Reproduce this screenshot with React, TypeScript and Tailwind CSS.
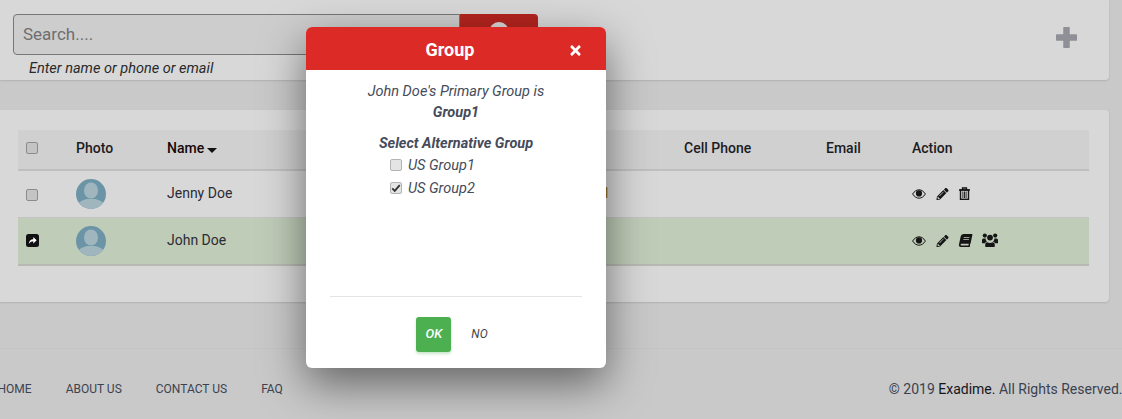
import { FaBook, FaPencilAlt, FaTimes } from "react-icons/fa";

const font = { fontFamily: "Roboto, 'Liberation Sans', sans-serif" };
const cols = "grid grid-cols-[58px_91px_300px_217px_142px_86px_177px] items-center";

function Box({ checked = false, dim = false }: { checked?: boolean; dim?: boolean }) {
  return (
    <span
      className={`flex h-[12px] w-[12px] items-center justify-center rounded-[2px] border ${
        dim ? "border-[#8c8c8c] bg-[#c4c4c4]" : "border-[#b4b4b4] bg-[#e4e4e4]"
      }`}
    >
      {checked && (
        <svg viewBox="0 0 12 12" className="h-[10px] w-[10px] text-[#333]">
          <path d="M1.5 6.5 4.5 9.5 10.5 2.5" fill="none" stroke="currentColor" strokeWidth="2.2" />
        </svg>
      )}
    </span>
  );
}

function Avatar() {
  return (
    <svg viewBox="0 0 30 30" className="h-[30px] w-[30px]">
      <defs>
        <clipPath id="avatar-clip">
          <circle cx="15" cy="15" r="15" />
        </clipPath>
      </defs>
      <g clipPath="url(#avatar-clip)">
        <rect width="30" height="30" fill="#6b95a6" />
        <ellipse cx="15" cy="11.5" rx="7" ry="8" fill="#a0b6bf" />
        <path d="M0 30c0-6 6-9 11-10h8c5 1 11 4 11 10z" fill="#a0b6bf" />
      </g>
    </svg>
  );
}

function EyeIcon() {
  return (
    <svg viewBox="0 0 14 10" className="h-[10px] w-[14px]">
      <path d="M.6 5C2.5 2.1 4.6.8 7 .8s4.500 1.300 6.400 4.200C11.500 7.900 9.400 9.200 7 9.200S2.500 7.900.6 5Z" fill="none" stroke="currentColor" strokeWidth="1" />
      <circle cx="7" cy="4.400" r="3.100" fill="currentColor" />
    </svg>
  );
}

function TrashIcon() {
  return (
    <svg viewBox="0 0 11 13" className="h-[13px] w-[11px]">
      <path d="M0 3h11M3.500 3V1h4v2" fill="none" stroke="currentColor" strokeWidth="1.300" />
      <rect x="1.500" y="3" width="8" height="9.300" fill="none" stroke="currentColor" strokeWidth="1.400" />
      <path d="M3.900 4.500v6.500M5.500 4.500v6.500M7.100 4.500v6.500" stroke="currentColor" strokeWidth="0.900" />
    </svg>
  );
}

function UsersIcon() {
  return (
    <svg viewBox="0 0 16 15" fill="currentColor" className="h-[15px] w-[16px]">
      <circle cx="2.800" cy="2.600" r="2.100" />
      <circle cx="13.200" cy="2.600" r="2.100" />
      <circle cx="8" cy="4.600" r="2.900" />
      <path d="M0 10V7.500C0 6.500.6 5.600 1.500 5.600h2.200c-.2 1.300.5 2.500 1.300 3.100C3.900 9 3.300 9.500 3 10.300H0Z" />
      <path d="M16 10V7.500c0-1-.6-1.900-1.500-1.900h-2.200c.2 1.300-.5 2.500-1.300 3.100 1.100.3 1.700.8 2 1.600H16Z" />
      <path d="M3.800 14c-.3 0-.6-.3-.6-.7v-1.500c0-1.400.9-2.600 2.200-2.600.7.500 1.600.8 2.600.8s1.900-.3 2.600-.8c1.300 0 2.200 1.200 2.200 2.600v1.500c0 .4-.3.700-.6.700H3.800Z" />
    </svg>
  );
}

function ShareIcon() {
  return (
    <svg viewBox="0 0 13 13" className="h-[13px] w-[13px]">
      <rect width="13" height="13" rx="2.500" fill="#111" />
      <path d="M2.800 10C3 7 4.700 5.300 7.300 5.200V3l3.400 3.200-3.400 3.200V7.300C5.300 7.300 3.900 8.200 2.800 10Z" fill="#fff" />
    </svg>
  );
}

function PlusIcon() {
  return (
    <svg viewBox="0 0 21 21" className="h-[21px] w-[21px] text-[#8f8f98]">
      <path d="M10.500 1.500v18M1.500 10.500h18" fill="none" stroke="currentColor" strokeWidth="6.500" strokeLinecap="round" />
    </svg>
  );
}

function Row({ name, green, peek }: { name: string; green?: boolean; peek?: boolean }) {
  return (
    <div
      className={`${cols} text-sm text-[#2b2b33] ${
        green ? "h-[48px] border-b-2 border-[#b8b8b4] bg-[#bfccb8]" : "h-[47px] border-b border-[#c4c4c4]"
      }`}
    >
      <div className={green ? "pb-[2px] pl-2" : "pl-2 pt-[1px]"}>{green ? <ShareIcon /> : <Box dim />}</div>
      <Avatar />
      <div className="pb-[2px]">{name}</div>
      <div className="pb-[2px] pr-[74px] text-right text-[#8a6a10]">{peek ? "Group1" : ""}</div>
      <div />
      <div />
      <div className="flex items-center gap-[10px] pb-[1px] text-[#151515]">
        <EyeIcon />
        <FaPencilAlt className="h-[12px] w-[13px]" />
        {green ? (
          <>
            <FaBook className="h-[13px] w-[13px] -skew-x-12" />
            <UsersIcon />
          </>
        ) : (
          <TrashIcon />
        )}
      </div>
    </div>
  );
}

export default function App() {
  return (
    <div className="relative h-[419px] w-[1122px] overflow-hidden bg-[#c9c9c9]" style={font}>
      {/* search card */}
      <div className="mr-[13px] flex h-[80px] items-start justify-between rounded-br-[4px] bg-[#d8d8d8] pl-[13px] pr-[32px] pt-[14px] shadow-[0_1px_2px_rgba(0,0,0,0.12)]">
        <div>
          <div className="flex">
            <div className="flex h-[41px] w-[447px] items-center rounded-l-[4px] border border-[#777] bg-[#cdcdcd] px-[9px] text-[17px] text-[#6e6e6e]">
              Search....
            </div>
            <div className="flex h-[41px] w-[78px] justify-center rounded-r-[4px] bg-[#b3241e] pt-[8px]">
              <span className="h-[20px] w-[20px] rounded-full bg-[#d8d8d8]" />
            </div>
          </div>
          <p className="ml-[16px] mt-[3px] text-[14.5px] italic text-[#2a2a2a]">Enter name or phone or email</p>
        </div>
        <div className="mt-[13px]">
          <PlusIcon />
        </div>
      </div>

      {/* table card */}
      <div className="mr-[13px] mt-[30px] h-[192px] rounded-r-[4px] bg-[#d8d8d8] px-[18px] pt-[20px] text-sm shadow-[0_1px_2px_rgba(0,0,0,0.12)]">
        <div className="pr-[2px]">
          <div className={`${cols} h-[41px] border-b-2 border-[#bfbfbf] bg-[#d0d0d0] pb-[3px] font-medium text-[#1c1c22]`}>
            <div className="pl-2">
              <Box dim />
            </div>
            <div>Photo</div>
            <div className="flex items-center gap-[3px] text-[#17060a]">
              Name
              <span className="mt-[5px] border-x-[5px] border-t-[5px] border-x-transparent border-t-[#111]" />
            </div>
            <div />
            <div>Cell Phone</div>
            <div>Email</div>
            <div>Action</div>
          </div>
          <Row name="Jenny Doe" peek />
          <Row name="John Doe" green />
        </div>
      </div>

      {/* footer */}
      <div className="mt-[46px] flex h-[71px] items-center justify-between border-t border-[#c4c4c4] pt-[10px] text-xs text-[#3c4250]">
        <div className="-ml-[2.500px] flex gap-[34px]">
          <span>HOME</span>
          <span>ABOUT US</span>
          <span>CONTACT US</span>
          <span>FAQ</span>
        </div>
        <div className="-mr-[0.500px] text-sm">
          © 2019 <span className="text-[#15151c]">Exadime.</span> All Rights Reserved.
        </div>
      </div>

      {/* modal */}
      <div className="absolute left-[306px] top-[27px] flex h-[341px] w-[300px] flex-col overflow-hidden rounded-[6px] bg-white shadow-[0_16px_44px_rgba(0,0,0,0.5)]">
        <div className="relative flex h-[43px] shrink-0 items-center justify-center bg-[#dc2b27] pr-[12px] pt-[2px] text-lg font-bold text-white">
          Group
          <FaTimes className="absolute right-[24px] top-[16px] h-[15px] w-[13px]" />
        </div>
        <div className="flex flex-1 flex-col items-center px-[24px] pt-[11px] text-[14.5px] italic leading-[21px] text-[#454b5a]">
          <p>John Doe's Primary Group is</p>
          <p className="font-bold">Group1</p>
          <p className="mt-[10px] font-bold">Select Alternative Group</p>
          <div className="mt-[2px] flex w-full flex-col gap-[5px] pl-[60px]">
            <label className="flex h-[18px] items-center gap-[6px]">
              <Box />
              US Group1
            </label>
            <label className="flex h-[18px] items-center gap-[6px]">
              <Box checked />
              US Group2
            </label>
          </div>
        </div>
        <div className="mx-[24px] flex h-[72px] shrink-0 items-start justify-center gap-[20px] border-t border-[#e4e4e4] pr-[8px] pt-[20px] text-xs font-medium italic">
          <button className="h-[35px] w-[35px] rounded-[3px] bg-[#4caf50] pb-[1px] text-[13px] text-white shadow-[0_2px_3px_rgba(76,175,80,0.3)]">OK</button>
          <button className="h-[35px] pb-[1px] font-normal text-[#444]">NO</button>
        </div>
      </div>
    </div>
  );
}
